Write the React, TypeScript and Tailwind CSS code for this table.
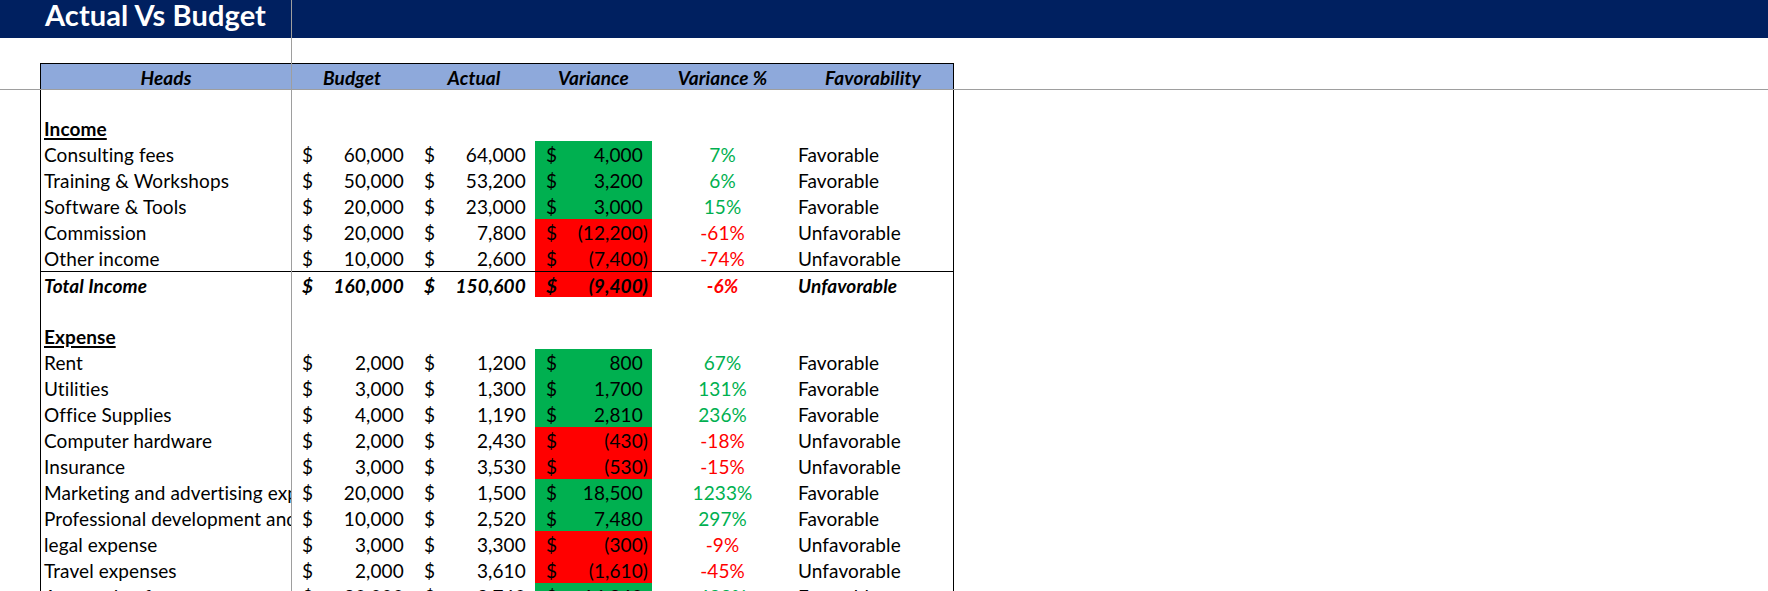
type Line = {
  head: string;
  budget: string;
  actual: string;
  variance: string;
  pct: string;
  good: boolean;
};

const income: Line[] = [
  { head: 'Consulting fees', budget: '60,000', actual: '64,000', variance: '4,000', pct: '7%', good: true },
  { head: 'Training & Workshops', budget: '50,000', actual: '53,200', variance: '3,200', pct: '6%', good: true },
  { head: 'Software & Tools', budget: '20,000', actual: '23,000', variance: '3,000', pct: '15%', good: true },
  { head: 'Commission', budget: '20,000', actual: '7,800', variance: '(12,200)', pct: '-61%', good: false },
  { head: 'Other income', budget: '10,000', actual: '2,600', variance: '(7,400)', pct: '-74%', good: false },
];

const expense: Line[] = [
  { head: 'Rent', budget: '2,000', actual: '1,200', variance: '800', pct: '67%', good: true },
  { head: 'Utilities', budget: '3,000', actual: '1,300', variance: '1,700', pct: '131%', good: true },
  { head: 'Office Supplies', budget: '4,000', actual: '1,190', variance: '2,810', pct: '236%', good: true },
  { head: 'Computer hardware', budget: '2,000', actual: '2,430', variance: '(430)', pct: '-18%', good: false },
  { head: 'Insurance', budget: '3,000', actual: '3,530', variance: '(530)', pct: '-15%', good: false },
  { head: 'Marketing and advertising expenses', budget: '20,000', actual: '1,500', variance: '18,500', pct: '1233%', good: true },
  { head: 'Professional development and training', budget: '10,000', actual: '2,520', variance: '7,480', pct: '297%', good: true },
  { head: 'legal expense', budget: '3,000', actual: '3,300', variance: '(300)', pct: '-9%', good: false },
  { head: 'Travel expenses', budget: '2,000', actual: '3,610', variance: '(1,610)', pct: '-45%', good: false },
  { head: 'Accounting fees', budget: '20,000', actual: '3,760', variance: '16,240', pct: '432%', good: true },
];

const cols = 'grid grid-cols-[250px_122px_122px_117px_141px_160px]';

function Money({ value, fill = '' }: { value: string; fill?: string }) {
  const neg = value.startsWith('(');
  return (
    <div className={`flex justify-between pl-[11px] pr-[4px] ${fill}`}>
      <span>$</span>
      <span>
        {value}
        {!neg && <span className="invisible">)</span>}
      </span>
    </div>
  );
}

function Row({ line, total = false }: { line: Line; total?: boolean }) {
  return (
    <div className={`${cols} ${total ? 'font-bold italic border-t border-black grid-rows-[25px] leading-[27px]' : 'grid-rows-[26px] leading-[28px]'}`}>
      <div className="pl-[3px] overflow-x-clip whitespace-nowrap">{line.head}</div>
      <Money value={line.budget} />
      <Money value={line.actual} />
      <Money value={line.variance} fill={line.good ? 'bg-[#00b050]' : 'bg-[#ff0000]'} />
      <div className={`text-center ${line.good ? 'text-[#00b050]' : 'text-[#ff0000]'}`}>{line.pct}</div>
      <div className="pl-[5px]">{line.good ? 'Favorable' : 'Unfavorable'}</div>
    </div>
  );
}

function Section({ title }: { title: string }) {
  return (
    <div className="h-[26px] leading-[28px] pl-[3px] font-bold">
      <span className="underline decoration-[1.5px] underline-offset-[2px]">{title}</span>
    </div>
  );
}

export default function App() {
  return (
    <div className="relative h-[591px] w-[1768px] overflow-hidden bg-white text-black font-['Lato',sans-serif] text-[19px] tracking-[0.1px]">
      <div className="h-[38px] bg-[#002060] pl-[45px]">
        <h1 className="text-white font-bold text-[29px] leading-[30px]">Actual Vs Budget</h1>
      </div>
      <div className="h-[25px]" />

      <div className="ml-[40px] w-[914px] border-x border-black">
        <div className={`${cols} grid-rows-[25px] leading-[27px] border-t border-black bg-[#8ea9db] font-bold italic text-center`}>
          <div>Heads</div>
          <div>Budget</div>
          <div>Actual</div>
          <div>Variance</div>
          <div>Variance %</div>
          <div>Favorability</div>
        </div>
        <div className="h-[26px]" />

        <Section title="Income" />
        {income.map((line) => (
          <Row key={line.head} line={line} />
        ))}
        <Row
          total
          line={{ head: 'Total Income', budget: '160,000', actual: '150,600', variance: '(9,400)', pct: '-6%', good: false }}
        />
        <div className="h-[26px]" />

        <Section title="Expense" />
        {expense.map((line) => (
          <Row key={line.head} line={line} />
        ))}
      </div>

      {/* freeze pane lines */}
      <div className="absolute left-[291px] top-0 h-full w-px bg-[#9e9e9e]" />
      <div className="absolute left-0 top-[89px] h-px w-full bg-[#9e9e9e]" />
    </div>
  );
}
